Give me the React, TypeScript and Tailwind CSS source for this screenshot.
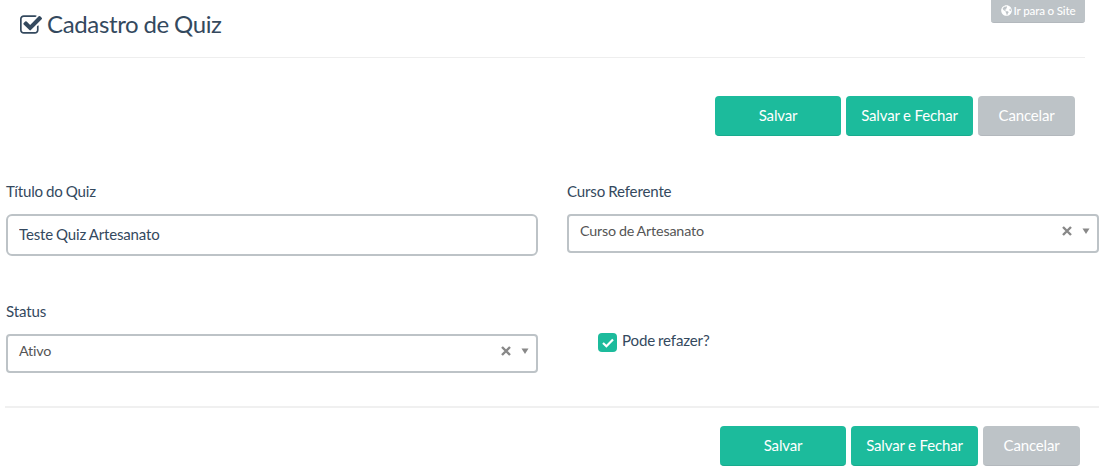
import React from "react";
import { FaGlobeAmericas } from "react-icons/fa";

function CheckSquareIcon() {
  return (
    <svg viewBox="64 128 1664 1408" className="h-[19px] w-[22px] shrink-0 fill-current" aria-hidden="true">
      <path d="M1472 930v318q0 119-84.5 203.5t-203.5 84.5h-832q-119 0-203.5-84.5t-84.5-203.5v-832q0-119 84.5-203.5t203.5-84.5h832q63 0 117 25 15 7 18 23 3 17-9 29l-49 49q-10 10-23 10-3 0-9-2-23-6-45-6h-832q-66 0-113 47t-47 113v832q0 66 47 113t113 47h832q66 0 113-47t47-113v-254q0-13 9-22l64-64q10-10 23-10 6 0 12 3 20 8 20 29zm231-489l-814 814q-24 24-57 24t-57-24l-430-430q-24-24-24-57t24-57l110-110q24-24 57-24t57 24l263 263 647-647q24-24 57-24t57 24l110 110q24 24 24 57t-24 57z" />
    </svg>
  );
}

function Actions() {
  const base = "h-10 rounded-[4px] border-b pb-px text-[15px] leading-none text-white";
  return (
    <div className="flex gap-[5px]">
      <button className={`${base} w-[126px] border-[#18ab8d] bg-[#1cbb9c]`}>Salvar</button>
      <button className={`${base} w-[127px] border-[#18ab8d] bg-[#1cbb9c]`}>Salvar e Fechar</button>
      <button className={`${base} w-[97px] border-[#b3b8bd] bg-[#bdc3c7]`}>Cancelar</button>
    </div>
  );
}

function Label({ children }: { children: React.ReactNode }) {
  return <div className="h-[33px] text-[15.1px] leading-[20px]">{children}</div>;
}

function Select({ value }: { value: string }) {
  return (
    <div className="flex h-[39px] items-start rounded-[4px] border-2 border-[#bdc3c7] pt-[5px] pl-[11px] pr-[7px] text-[#555]">
      <span className="grow text-[14.3px] leading-[20px]">{value}</span>
      <svg viewBox="0 0 10 10" className="mt-[5px] h-[10px] w-[10px]" aria-hidden="true">
        <path d="M1 1 9 9M9 1 1 9" stroke="#888" strokeWidth="2.4" />
      </svg>
      <svg viewBox="0 0 8 6" className="mt-[7px] ml-[10px] h-[6px] w-[8px]" aria-hidden="true">
        <path d="M.5.5h7L4 6z" fill="#888" />
      </svg>
    </div>
  );
}

export default function App() {
  return (
    <div className="h-[473px] w-[1100px] overflow-hidden bg-white font-['Lato',sans-serif] tracking-[-0.01em] text-[#34495e] [word-spacing:-0.04em]">
      <header className="mr-[15px] ml-5 flex h-[58px] items-start justify-between border-b border-[#eee]">
        <h1 className="flex items-center gap-[5px] pt-[8px] text-[24px] leading-[32px] tracking-[-0.015em]">
          <CheckSquareIcon />
          <span>Cadastro de Quiz</span>
        </h1>
        <button className="flex h-[23px] w-[94px] items-center justify-center gap-[2px] rounded-b-[3px] border-b border-[#b3b8bd] bg-[#bdc3c7] text-[11.6px] font-medium text-white">
          <FaGlobeAmericas className="-mt-px size-[11px]" />
          Ir para o Site
        </button>
      </header>
      <div className="flex justify-end pt-[38px] pr-[25px]">
        <Actions />
      </div>
      <main className="grid grid-cols-[532px_532px] gap-x-[29px] pt-[45px] pl-[6px]">
        <section className="h-[120px]">
          <Label>Título do Quiz</Label>
          <input
            className="h-[42px] w-full rounded-[6px] border-2 border-[#bdc3c7] px-[11px] pb-[2px] text-[15px] tracking-[-0.01em] outline-none [word-spacing:-0.04em]"
            defaultValue="Teste Quiz Artesanato"
          />
        </section>
        <section>
          <Label>Curso Referente</Label>
          <Select value="Curso de Artesanato" />
        </section>
        <section className="h-[105px]">
          <Label>Status</Label>
          <Select value="Ativo" />
        </section>
        <label className="flex h-[20px] items-start gap-[5px] pt-[29px] pl-[31px]">
          <span className="mt-[3px] flex size-[19px] items-center justify-center rounded-[4px] bg-[#1cbb9c]">
            <svg viewBox="0 0 12 10" className="h-[10px] w-[12px]" aria-hidden="true">
              <path d="M1 5 4.4 8.3 11 1.5" fill="none" stroke="white" strokeWidth="2.2" />
            </svg>
          </span>
          <span className="text-[15.1px] leading-[20px]">Pode refazer?</span>
        </label>
      </main>
      <footer className="mr-px ml-[5px] flex justify-end border-t-2 border-[#f0f0f0] pt-[18px] pr-[19px]">
        <Actions />
      </footer>
    </div>
  );
}
